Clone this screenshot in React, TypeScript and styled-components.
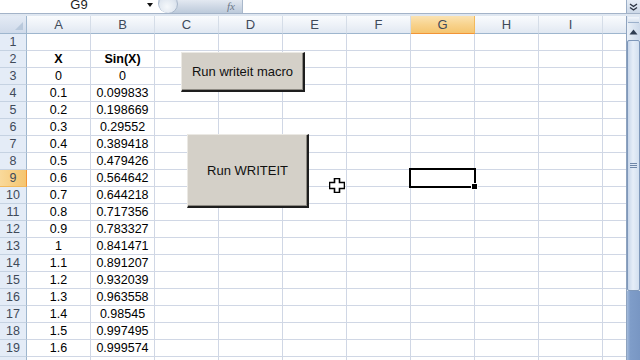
import styled, { createGlobalStyle } from "styled-components";

const GlobalStyle = createGlobalStyle`
  html, body {
    margin: 0;
    padding: 0;
    background: #ffffff;
    overflow: hidden;
  }
  body {
    font-family: "Liberation Sans", Arial, sans-serif;
  }
`;

const columns = ["A", "B", "C", "D", "E", "F", "G", "H", "I", "J"];
const rowCount = 20;
const activeCol = "G";
const activeRow = 9;

const data: Record<number, [string, string]> = {
  2: ["X", "Sin(X)"],
  3: ["0", "0"],
  4: ["0.1", "0.099833"],
  5: ["0.2", "0.198669"],
  6: ["0.3", "0.29552"],
  7: ["0.4", "0.389418"],
  8: ["0.5", "0.479426"],
  9: ["0.6", "0.564642"],
  10: ["0.7", "0.644218"],
  11: ["0.8", "0.717356"],
  12: ["0.9", "0.783327"],
  13: ["1", "0.841471"],
  14: ["1.1", "0.891207"],
  15: ["1.2", "0.932039"],
  16: ["1.3", "0.963558"],
  17: ["1.4", "0.98545"],
  18: ["1.5", "0.997495"],
  19: ["1.6", "0.999574"],
};

export default function App() {
  const rows = Array.from({ length: rowCount }, (_, i) => i + 1);

  return (
    <Screen>
      <GlobalStyle />
      <FormulaBar>
        <NameBox>
          <NameText>G9</NameText>
          <DropArrow />
        </NameBox>
        <FxPill>
          <PillKnob />
          <FxLabel>fx</FxLabel>
        </FxPill>
        <FormulaInput />
        <ExpandButton>
          <svg width="9" height="8" viewBox="0 0 9 8">
            <path d="M1 1 L4.5 3.5 L8 1 M1 4.5 L4.5 7 L8 4.5" fill="none" stroke="#2b3442" strokeWidth="1.4" />
          </svg>
        </ExpandButton>
      </FormulaBar>
      <Strip />
      <SheetArea>
        <Viewport>
          <Grid>
            <Corner />
            {columns.map((c) => (
              <ColHeader key={c} $active={c === activeCol}>
                {c}
              </ColHeader>
            ))}
            {rows.map((r) => (
              <RowGroup key={r} r={r} />
            ))}
          </Grid>

          <MacroButton $x={181} $y={52} $w={124} $h={40}>
            Run writeit macro
          </MacroButton>
          <MacroButton $x={187} $y={134} $w={122} $h={74}>
            Run WRITEIT
          </MacroButton>

          <Cursor width="16" height="15" viewBox="0 0 16 15">
            <path
              d="M5.5 0.5 H10.5 V4.5 H15.5 V10.5 H10.5 V14.5 H5.5 V10.5 H0.5 V4.5 H5.5 Z"
              fill="#ffffff"
              stroke="#000000"
              strokeWidth="1.6"
            />
          </Cursor>
        </Viewport>
        <Scrollbar>
          <SplitBox />
          <ArrowButton>
            <svg width="9" height="6" viewBox="0 0 9 6">
              <path d="M0.5 5.5 L4.5 0.5 L8.5 5.5 Z" fill="#2f3d52" />
            </svg>
          </ArrowButton>
          <Thumb>
            <Grip />
            <Grip />
            <Grip />
          </Thumb>
          <Track />
        </Scrollbar>
      </SheetArea>
    </Screen>
  );
}

function RowGroup({ r }: { r: number }) {
  const values = data[r];
  return (
    <>
      <RowHeader $active={r === activeRow}>{r}</RowHeader>
      {columns.map((c, i) => {
        const text = values && i < 2 ? values[i] : "";
        return (
          <Cell key={c} $bold={r === 2} $selected={r === activeRow && c === activeCol}>
            {text}
          </Cell>
        );
      })}
    </>
  );
}

const Screen = styled.div`
  width: 640px;
  height: 360px;
  display: flex;
  flex-direction: column;
  overflow: hidden;
  background: #ffffff;
`;

const FormulaBar = styled.div`
  height: 14px;
  display: flex;
  box-sizing: border-box;
  border-bottom: 1px solid #a3b3c8;
  background: #ffffff;
`;

const NameBox = styled.div`
  width: 158px;
  display: flex;
  align-items: flex-start;
  justify-content: center;
  position: relative;
  overflow: hidden;
`;

const NameText = styled.span`
  font-size: 13px;
  line-height: 14px;
  margin-top: -2px;
  color: #1c1c1c;
`;

const DropArrow = styled.span`
  position: absolute;
  right: 5px;
  top: 3px;
  width: 0;
  height: 0;
  border-left: 3.5px solid transparent;
  border-right: 3.5px solid transparent;
  border-top: 4px solid #111111;
`;

const FxPill = styled.div`
  width: 85px;
  display: flex;
  align-items: center;
  justify-content: space-between;
  padding-right: 7px;
  box-sizing: border-box;
  border-radius: 0 0 0 10px;
  background: linear-gradient(180deg, #e3e9f1 0%, #cdd7e4 55%, #bccadb 100%);
  border-right: 1px solid #a9b8cb;
  overflow: hidden;
`;

const PillKnob = styled.span`
  width: 18px;
  height: 18px;
  margin-top: -6px;
  border-radius: 50%;
  background: radial-gradient(circle at 45% 65%, #f5f8fb 0%, #e0e7f0 55%, #c0ccdb 100%);
  border: 1px solid #a8b7ca;
`;

const FxLabel = styled.span`
  font-family: "Liberation Serif", "Times New Roman", serif;
  font-style: italic;
  font-size: 11px;
  line-height: 12px;
  color: #6c7788;
  margin-top: -1px;
`;

const FormulaInput = styled.div`
  flex: 1;
  background: #ffffff;
`;

const ExpandButton = styled.div`
  width: 13px;
  display: flex;
  align-items: center;
  justify-content: center;
  background: linear-gradient(180deg, #e6edf6, #cdd9e8);
  border-left: 1px solid #9aaec7;
`;

const Strip = styled.div`
  height: 2px;
  background: #dfe7f1;
`;

const SheetArea = styled.div`
  flex: 1;
  min-height: 0;
  display: flex;
`;

const Viewport = styled.div`
  flex: 1;
  position: relative;
  overflow: hidden;
`;

const Grid = styled.div`
  display: grid;
  grid-template-columns: 27px repeat(10, 64px);
  grid-template-rows: 18px;
  grid-auto-rows: 17px;
  width: max-content;
`;

const Corner = styled.div`
  box-sizing: border-box;
  border-right: 1px solid #9eb6ce;
  border-bottom: 1px solid #9eb6ce;
  background: linear-gradient(180deg, #e4ebf5, #cfdaea);
  position: relative;

  &::after {
    content: "";
    position: absolute;
    right: 3px;
    bottom: 3px;
    width: 0;
    height: 0;
    border-left: 8px solid transparent;
    border-bottom: 8px solid #b9c9dc;
  }
`;

const ColHeader = styled.div<{ $active?: boolean }>`
  box-sizing: border-box;
  display: flex;
  align-items: center;
  justify-content: center;
  font-size: 13px;
  color: #3f4a5a;
  border-right: 1px solid ${(p) => (p.$active ? "#f2b95c" : "#d5dde8")};
  border-bottom: 1px solid ${(p) => (p.$active ? "#f29436" : "#9eb6ce")};
  background: ${(p) =>
    p.$active
      ? "linear-gradient(180deg, #fbe3b3 0%, #f8d38d 50%, #f5c570 100%)"
      : "linear-gradient(180deg, #f9fbfd 0%, #eef2f8 50%, #e1e8f2 100%)"};
`;

const RowHeader = styled.div<{ $active?: boolean }>`
  box-sizing: border-box;
  display: flex;
  align-items: center;
  justify-content: center;
  font-size: 12.5px;
  color: #3f4a5a;
  border-right: 1px solid ${(p) => (p.$active ? "#f29436" : "#9eb6ce")};
  border-bottom: 1px solid ${(p) => (p.$active ? "#f2b95c" : "#c5d2e2")};
  background: ${(p) => (p.$active ? "linear-gradient(90deg, #f9d99b, #f5c570)" : "#e4ecf7")};
`;

const Cell = styled.div<{ $bold?: boolean; $selected?: boolean }>`
  box-sizing: border-box;
  position: relative;
  display: flex;
  align-items: center;
  justify-content: center;
  font-size: 12.5px;
  font-weight: ${(p) => (p.$bold ? 700 : 400)};
  color: #000000;
  border-right: 1px solid #d0d7e5;
  border-bottom: 1px solid #d0d7e5;
  white-space: nowrap;

  ${(p) =>
    p.$selected &&
    `
    &::before {
      content: "";
      position: absolute;
      left: -2px;
      top: -2px;
      right: -2px;
      bottom: -2px;
      border: 2px solid #000000;
      z-index: 2;
    }
    &::after {
      content: "";
      position: absolute;
      right: -4px;
      bottom: -4px;
      width: 5px;
      height: 5px;
      background: #000000;
      border: 1px solid #ffffff;
      z-index: 3;
    }
  `}
`;

const MacroButton = styled.div<{ $x: number; $y: number; $w: number; $h: number }>`
  position: absolute;
  left: ${(p) => p.$x}px;
  top: ${(p) => p.$y - 16}px;
  width: ${(p) => p.$w}px;
  height: ${(p) => p.$h}px;
  box-sizing: border-box;
  display: flex;
  align-items: center;
  justify-content: center;
  background: #d4d0c8;
  font-size: 13px;
  color: #111111;
  border-top: 1px solid #ebe9e4;
  border-left: 1px solid #ebe9e4;
  border-right: 2px solid #1e1e1e;
  border-bottom: 2px solid #1e1e1e;
  box-shadow: inset -1px -1px 0 #8d8a83;
`;

const Cursor = styled.svg`
  position: absolute;
  left: 329px;
  top: 162px;
`;

const Scrollbar = styled.div`
  width: 13px;
  display: flex;
  flex-direction: column;
  border-left: 1px solid #8ea3bf;
  background: #dfe8f4;
`;

const SplitBox = styled.div`
  height: 5px;
  margin: 1px 1px 0;
  border-bottom: 1px solid #9bb0cb;
  background: linear-gradient(180deg, #f2f6fb, #d8e2ef);
`;

const ArrowButton = styled.div`
  height: 17px;
  display: flex;
  align-items: center;
  justify-content: center;
  background: linear-gradient(90deg, #e9f0f8, #ccd9ea);
`;

const Thumb = styled.div`
  height: 251px;
  box-sizing: border-box;
  display: flex;
  flex-direction: column;
  align-items: center;
  justify-content: center;
  gap: 1px;
  border: 1px solid #7f98ba;
  border-radius: 2px;
  background: linear-gradient(90deg, #c7d6ea 0%, #e6eef8 45%, #d3e0f0 100%);
`;

const Grip = styled.span`
  width: 7px;
  height: 1px;
  background: #6f87a8;
`;

const Track = styled.div`
  flex: 1;
  background: linear-gradient(90deg, #a5bcdc 0%, #7f9dc9 25%, #7896c3 100%);
`;
